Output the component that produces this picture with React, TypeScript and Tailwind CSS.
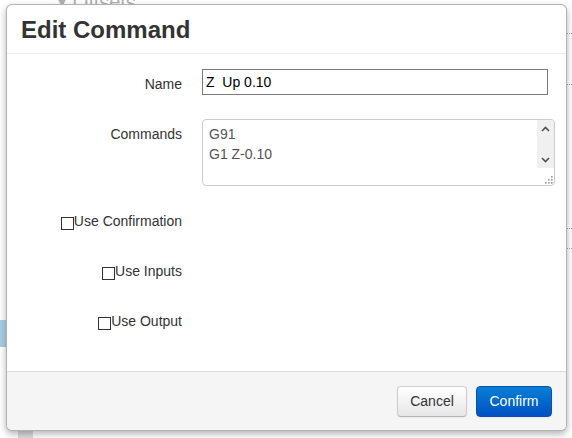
import React from 'react';

const labelCls = 'w-[160px] shrink-0 pt-[5px] text-right text-[14px] leading-[20px] text-[#333]';

function Checkbox() {
  return (
    <span className="inline-block h-[13px] w-[13px] border border-[#333] bg-white align-[-4px]" />
  );
}

function FieldRow({ label, children }: { label: string; children: React.ReactNode }) {
  return (
    <div className="flex min-h-[30px]">
      <label className={labelCls}>{label}</label>
      <div className="ml-[20px]">{children}</div>
    </div>
  );
}

function CheckRow({ label }: { label: string }) {
  return (
    <div className="flex h-[30px]">
      <label className={labelCls}>
        <Checkbox />
        {label}
      </label>
    </div>
  );
}

function ChevronUp() {
  return (
    <svg width="9" height="6" viewBox="0 0 9 6">
      <polyline points="1,5 4.5,1.5 8,5" fill="none" stroke="#505050" strokeWidth="1.6" />
    </svg>
  );
}

function ChevronDown() {
  return (
    <svg width="9" height="6" viewBox="0 0 9 6">
      <polyline points="1,1 4.5,4.5 8,1" fill="none" stroke="#505050" strokeWidth="1.6" />
    </svg>
  );
}

function ResizeGrip() {
  return (
    <svg width="9" height="9" viewBox="0 0 9 9">
      {[
        [7, 1],
        [4, 4],
        [7, 4],
        [1, 7],
        [4, 7],
        [7, 7],
      ].map(([x, y]) => (
        <rect key={`${x}-${y}`} x={x} y={y} width="1.6" height="1.6" fill="#9a9a9a" />
      ))}
    </svg>
  );
}

// textarea with a classic always-on scrollbar and resize corner
function CommandsBox({ lines }: { lines: string[] }) {
  return (
    <div className="flex h-[67px] w-[353px] overflow-hidden rounded-[4px] border border-[#ccc] bg-white">
      <textarea
        readOnly
        value={lines.join('\n')}
        className="flex-1 resize-none overflow-hidden bg-transparent px-[6px] py-[4px] text-[14px] leading-[20px] text-[#555] outline-none"
      />
      <div className="flex w-[17px] flex-col">
        <div className="flex h-[48px] flex-col justify-between bg-[#f0f0f0]">
          <div className="flex h-[17px] items-center justify-center">
            <ChevronUp />
          </div>
          <div className="flex h-[17px] items-center justify-center">
            <ChevronDown />
          </div>
        </div>
        <div className="flex flex-1 items-end justify-end pb-[1px] pr-[1px]">
          <ResizeGrip />
        </div>
      </div>
    </div>
  );
}

export default function App() {
  return (
    <div className="relative h-[438px] w-[572px] overflow-hidden bg-white font-['Liberation_Sans',Arial,Helvetica,sans-serif]">
      {/* page content behind the dialog */}
      <div className="absolute left-[55px] top-[-13px] flex items-center gap-[4px] text-[20px] text-[#b0b0b0]">
        <span className="text-[14px]">▼</span>
        <span>Offsets</span>
      </div>
      <div className="absolute left-0 top-[320px] h-[27px] w-[8px] bg-[#a9cde6]" />
      <div className="absolute left-[18px] top-[426px] h-[12px] w-[15px] bg-[#dcdcdc]" />
      <div className="absolute right-0 top-[33px] w-[8px] border-t border-dotted border-[#aaa]" />
      <div className="absolute right-0 top-[84px] w-[8px] border-t border-dotted border-[#aaa]" />
      <div className="absolute right-0 top-[228px] w-[8px] border-t border-dotted border-[#aaa]" />
      <div className="absolute right-0 top-[248px] w-[8px] border-t border-dotted border-[#aaa]" />

      {/* Edit Command dialog */}
      <div className="absolute left-[6px] top-[4px] flex h-[427px] w-[561px] flex-col overflow-hidden rounded-[6px] border border-black/30 bg-white shadow-[0_3px_7px_rgba(0,0,0,0.3)]">
        <div className="flex h-[49px] shrink-0 items-center border-b border-[#eee] pl-[14px]">
          <h3 className="text-[24px] font-bold leading-[27px] text-[#333]">Edit Command</h3>
        </div>

        <div className="flex flex-1 flex-col gap-[20px] px-[15px] pt-[15px]">
          <FieldRow label="Name">
            <input
              readOnly
              value="Z  Up 0.10"
              className="h-[26px] w-[346px] border border-[#7a7a7a] bg-white px-[3px] text-[14px] text-black outline-none"
            />
          </FieldRow>

          <FieldRow label="Commands">
            <CommandsBox lines={['G91', 'G1 Z-0.10']} />
          </FieldRow>

          <CheckRow label="Use Confirmation" />
          <CheckRow label="Use Inputs" />
          <CheckRow label="Use Output" />
        </div>

        <div className="flex h-[59px] shrink-0 items-center justify-end gap-[9px] border-t border-[#ddd] bg-[#f5f5f5] pr-[14px]">
          <button className="h-[31px] w-[70px] rounded-[4px] border border-[#ccc] border-b-[#b3b3b3] bg-linear-to-b from-white to-[#e6e6e6] text-[14px] text-[#333] shadow-[0_1px_2px_rgba(0,0,0,0.05)]">
            Cancel
          </button>
          <button className="h-[31px] w-[76px] rounded-[4px] border border-[#0b4fb0] bg-linear-to-b from-[#0a7fd6] to-[#0450c4] text-[14px] text-white shadow-[0_1px_2px_rgba(0,0,0,0.05)]">
            Confirm
          </button>
        </div>
      </div>
    </div>
  );
}
